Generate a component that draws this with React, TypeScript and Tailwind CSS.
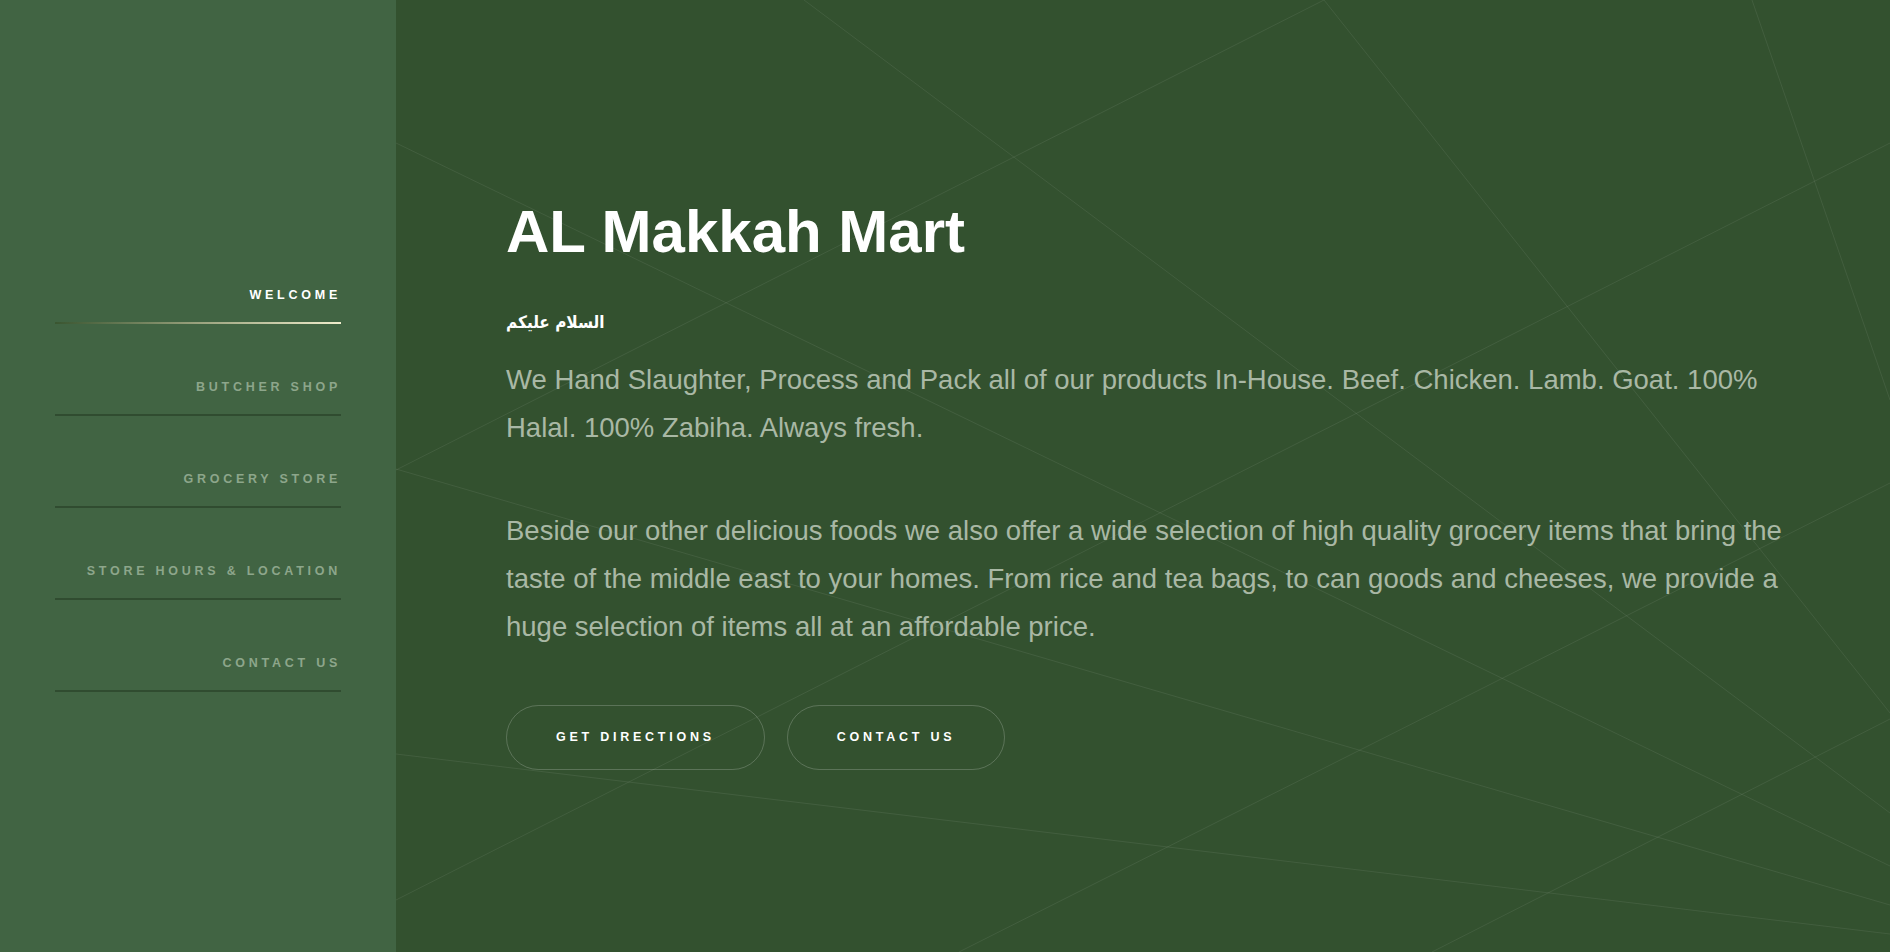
const navItems = [
  { label: 'Welcome', active: true },
  { label: 'Butcher Shop', active: false },
  { label: 'Grocery Store', active: false },
  { label: 'Store Hours & Location', active: false },
  { label: 'Contact Us', active: false },
];

// background strokes, in main-panel coordinates (1494 x 952)
const bgLines: [number, number, number, number][] = [
  [408, 0, 1494, 813],
  [0, 143, 1494, 866],
  [0, 470, 928, 0],
  [1356, 0, 1494, 400],
  [928, 0, 1494, 713],
  [0, 900, 1494, 143],
  [0, 754, 1494, 934],
  [0, 469, 1494, 905],
  [1494, 719, 1036, 952],
  [1494, 483, 563, 952],
];

function Sidebar() {
  return (
    <aside className="w-[396px] shrink-0 bg-[#416443] px-[55px] pt-[232px]">
      <nav>
        <ul>
          {navItems.map((item) => (
            <li key={item.label}>
              <a
                href="#"
                className={`block pt-[53px] pb-[17px] text-right text-[12.5px] leading-[20px] font-bold uppercase tracking-[0.3em] ${
                  item.active ? 'text-white' : 'text-[#8da68b]'
                }`}
              >
                {item.label}
              </a>
              <div
                className={`h-[2px] ${
                  item.active ? 'bg-linear-to-r from-[#3a5631] via-[#9aa27e] to-[#f0edcc]' : 'bg-[#304c30]'
                }`}
              />
            </li>
          ))}
        </ul>
      </nav>
    </aside>
  );
}

function Backdrop() {
  return (
    <svg
      className="absolute inset-0 h-full w-full pointer-events-none"
      viewBox="0 0 1494 952"
      preserveAspectRatio="none"
      fill="none"
    >
      {bgLines.map(([x1, y1, x2, y2], i) => (
        <line key={i} x1={x1} y1={y1} x2={x2} y2={y2} stroke="rgba(255,255,255,0.075)" strokeWidth={1} />
      ))}
    </svg>
  );
}

export default function App() {
  return (
    <div className="flex h-screen min-h-[952px] w-full overflow-hidden font-['Liberation_Sans',Arial,sans-serif]">
      <Sidebar />
      <main className="relative flex-1 bg-[#33512f]">
        <Backdrop />
        <div className="relative max-w-[1410px] pl-[110px] pt-[196px]">
          <h1 className="text-[60px] leading-[72px] font-bold text-white">AL Makkah Mart</h1>
          <h2 className="mt-[40px] text-[17px] leading-[28px] font-bold text-white font-['DejaVu_Sans_Condensed','DejaVu_Sans',sans-serif]">
            السلام عليكم
          </h2>
          <p className="mt-[20px] text-[27.5px] leading-[48px] text-[#a9b8a5]">
            We Hand Slaughter, Process and Pack all of our products In-House. Beef. Chicken. Lamb. Goat. 100% Halal. 100% Zabiha. Always fresh.
          </p>
          <p className="mt-[55px] text-[27.5px] leading-[48px] text-[#a9b8a5]">
            Beside our other delicious foods we also offer a wide selection of high quality grocery items that bring the taste of the middle east to your homes. From rice and tea bags, to can goods and cheeses, we provide a huge selection of items all at an affordable price.
          </p>
          <div className="mt-[54px] flex gap-[22px]">
            <a
              href="#"
              className="inline-flex h-[65px] items-center rounded-full border border-white/20 px-[49px] text-[12.5px] font-bold uppercase tracking-[0.3em] text-white"
            >
              Get Directions
            </a>
            <a
              href="#"
              className="inline-flex h-[65px] items-center rounded-full border border-white/20 px-[49px] text-[12.5px] font-bold uppercase tracking-[0.3em] text-white"
            >
              Contact Us
            </a>
          </div>
        </div>
      </main>
    </div>
  );
}
